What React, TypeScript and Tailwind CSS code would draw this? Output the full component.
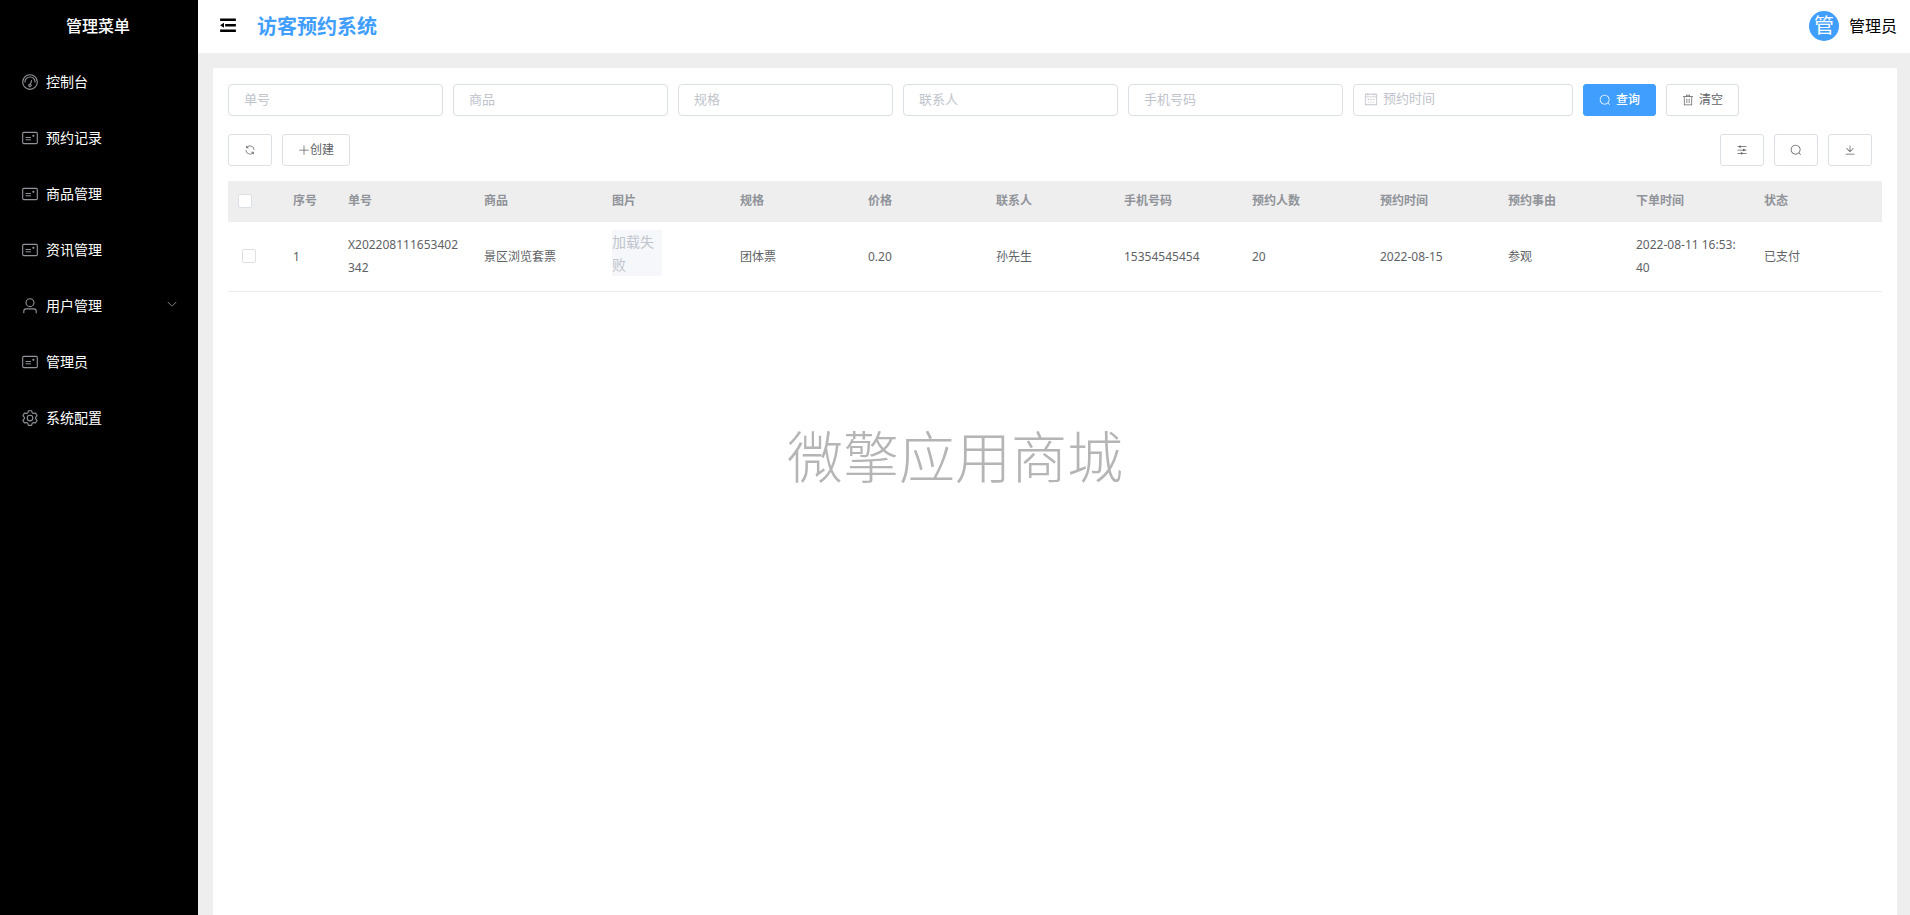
import React, { useState } from "react";

interface IconProps {
  name: IconName;
  className?: string;
}

// 1024-grid glyphs, filled with the current text colour
const ICONS = {
  odometer: [
    "M512 896a384 384 0 1 0 0-768 384 384 0 0 0 0 768zm0 64a448 448 0 1 1 0-896 448 448 0 0 1 0 896z",
    "M192 512a320 320 0 1 1 640 0 32 32 0 1 1-64 0 256 256 0 1 0-512 0 32 32 0 0 1-64 0z",
    "M570.432 627.84A96 96 0 1 1 509.568 608l60.992-187.776A32 32 0 1 1 631.424 440l-60.992 187.776zM502.08 734.464a32 32 0 1 0 19.84-60.928 32 32 0 0 0-19.84 60.928z",
  ],
  postcard: [
    "M160 224a32 32 0 0 0-32 32v512a32 32 0 0 0 32 32h704a32 32 0 0 0 32-32V256a32 32 0 0 0-32-32H160zm0-64h704a96 96 0 0 1 96 96v512a96 96 0 0 1-96 96H160a96 96 0 0 1-96-96V256a96 96 0 0 1 96-96z",
    "M704 320a64 64 0 1 1 0 128 64 64 0 0 1 0-128zM288 448h256q32 0 32 32t-32 32H288q-32 0-32-32t32-32zm0 128h256q32 0 32 32t-32 32H288q-32 0-32-32t32-32z",
  ],
  user: [
    "M512 512a192 192 0 1 0 0-384 192 192 0 0 0 0 384zm0 64a256 256 0 1 1 0-512 256 256 0 0 1 0 512zm320 320v-96a96 96 0 0 0-96-96H288a96 96 0 0 0-96 96v96a32 32 0 1 1-64 0v-96a160 160 0 0 1 160-160h448a160 160 0 0 1 160 160v96a32 32 0 1 1-64 0z",
  ],
  setting: [
    "M600.704 64a32 32 0 0 1 30.464 22.208l35.2 109.376c14.784 7.232 28.928 15.36 42.432 24.512l112.384-24.192a32 32 0 0 1 34.432 15.36L944.32 364.8a32 32 0 0 1-4.032 37.504l-77.12 85.12a357.12 357.12 0 0 1 0 49.024l77.12 85.248a32 32 0 0 1 4.032 37.504l-88.704 153.6a32 32 0 0 1-34.432 15.296L708.8 803.904c-13.44 9.088-27.648 17.28-42.368 24.512l-35.264 109.376A32 32 0 0 1 600.704 960H423.296a32 32 0 0 1-30.464-22.208L357.696 828.48a351.616 351.616 0 0 1-42.56-24.64l-112.32 24.256a32 32 0 0 1-34.432-15.36L79.68 659.2a32 32 0 0 1 4.032-37.504l77.12-85.248a357.12 357.12 0 0 1 0-48.896l-77.12-85.248A32 32 0 0 1 79.68 364.8l88.704-153.6a32 32 0 0 1 34.432-15.296l112.32 24.256c13.568-9.152 27.776-17.408 42.56-24.64l35.2-109.312A32 32 0 0 1 423.232 64H600.64zm-23.424 64H446.72l-36.352 113.088-24.512 11.968a294.113 294.113 0 0 0-34.816 20.096l-22.656 15.36-116.224-25.088-65.28 113.152 79.68 88.192-1.92 27.136a293.12 293.12 0 0 0 0 40.192l1.92 27.136-79.808 88.192 65.344 113.152 116.224-25.024 22.656 15.296a294.113 294.113 0 0 0 34.816 20.096l24.512 11.968L446.72 896h130.688l36.48-113.152 24.448-11.904a288.282 288.282 0 0 0 34.752-20.096l22.592-15.296 116.288 25.024 65.28-113.152-79.744-88.192 1.92-27.136a293.12 293.12 0 0 0 0-40.256l-1.92-27.136 79.808-88.128-65.344-113.152-116.288 24.96-22.592-15.232a287.616 287.616 0 0 0-34.752-20.096l-24.448-11.904L577.344 128zM512 320a192 192 0 1 1 0 384 192 192 0 0 1 0-384zm0 64a128 128 0 1 0 0 256 128 128 0 0 0 0-256z",
  ],
  arrowDown: [
    "M831.872 340.864 512 652.672 192.128 340.864a30.592 30.592 0 0 0-42.752 0 29.12 29.12 0 0 0 0 41.6L489.664 714.24a32 32 0 0 0 44.672 0l340.288-331.712a29.12 29.12 0 0 0 0-41.728 30.592 30.592 0 0 0-42.752 0z",
  ],
  refresh: [
    "M771.776 794.88A384 384 0 0 1 128 512h64a320 320 0 0 0 555.712 216.448H654.72a32 32 0 1 1 0-64h149.056a32 32 0 0 1 32 32v148.928a32 32 0 1 1-64 0v-50.56zM276.288 295.616h92.992a32 32 0 0 1 0 64H220.16a32 32 0 0 1-32-32V178.56a32 32 0 0 1 64 0v50.56A384 384 0 0 1 896.128 512h-64a320 320 0 0 0-555.776-216.384z",
  ],
  plus: [
    "M480 480V128a32 32 0 0 1 64 0v352h352a32 32 0 1 1 0 64H544v352a32 32 0 1 1-64 0V544H128a32 32 0 0 1 0-64h352z",
  ],
  search: [
    "m795.904 750.72 124.992 124.928a32 32 0 0 1-45.248 45.248L750.656 795.904a416 416 0 1 1 45.248-45.248zM480 832a352 352 0 1 0 0-704 352 352 0 0 0 0 704z",
  ],
  trash: [
    "M160 256H96a32 32 0 0 1 0-64h256V95.936a32 32 0 0 1 32-32h256a32 32 0 0 1 32 32V192h256a32 32 0 1 1 0 64h-64v672a32 32 0 0 1-32 32H192a32 32 0 0 1-32-32V256zm448-64v-64H416v64h192zM224 896h576V256H224v640zm192-128a32 32 0 0 1-32-32V416a32 32 0 0 1 64 0v320a32 32 0 0 1-32 32zm192 0a32 32 0 0 1-32-32V416a32 32 0 0 1 64 0v320a32 32 0 0 1-32 32z",
  ],
  calendar: [
    "M128 384v512h768V192H768v32a32 32 0 1 1-64 0v-32H320v32a32 32 0 0 1-64 0v-32H128v128h768v64H128zm192-256h384V96a32 32 0 1 1 64 0v32h160a32 32 0 0 1 32 32v768a32 32 0 0 1-32 32H96a32 32 0 0 1-32-32V160a32 32 0 0 1 32-32h160V96a32 32 0 0 1 64 0v32zm-32 384h64a32 32 0 0 1 0 64h-64a32 32 0 0 1 0-64zm0 192h64a32 32 0 1 1 0 64h-64a32 32 0 1 1 0-64zm192-192h64a32 32 0 0 1 0 64h-64a32 32 0 0 1 0-64zm0 192h64a32 32 0 1 1 0 64h-64a32 32 0 1 1 0-64zm192-192h64a32 32 0 1 1 0 64h-64a32 32 0 1 1 0-64zm0 192h64a32 32 0 1 1 0 64h-64a32 32 0 1 1 0-64z",
  ],
  operation: [
    "M389.44 768a96.064 96.064 0 0 1 181.12 0H896v64H570.56a96.064 96.064 0 0 1-181.12 0H128v-64h261.44zm192-288a96.064 96.064 0 0 1 181.12 0H896v64H762.56a96.064 96.064 0 0 1-181.12 0H128v-64h453.44zm-320-288a96.064 96.064 0 0 1 181.12 0H896v64H442.56a96.064 96.064 0 0 1-181.12 0H128v-64h133.44z",
  ],
  download: [
    "M160 832h704a32 32 0 1 1 0 64H160a32 32 0 1 1 0-64zm384-253.696 236.288-236.352 45.248 45.248L508.8 704 192 387.2l45.248-45.248L480 584.704V128h64v450.304z",
  ],
  fold: [
    "M64 142h896v142H64zM350 456h610v142H350zM64 768h896v142H64zM284 384v288L64 528z",
  ],
};

type IconName = keyof typeof ICONS;

const Icon: React.FC<IconProps> = ({ name, className = "size-3" }) => (
  <svg
    viewBox="0 0 1024 1024"
    fill="currentColor"
    aria-hidden="true"
    className={`shrink-0 ${className}`}
  >
    {ICONS[name].map((d) => (
      <path key={d} d={d} />
    ))}
  </svg>
);

const MENU: { label: string; icon: IconName; children?: boolean }[] = [
  { label: "控制台", icon: "odometer" },
  { label: "预约记录", icon: "postcard" },
  { label: "商品管理", icon: "postcard" },
  { label: "资讯管理", icon: "postcard" },
  { label: "用户管理", icon: "user", children: true },
  { label: "管理员", icon: "postcard" },
  { label: "系统配置", icon: "setting" },
];

const FILTERS = ["单号", "商品", "规格", "联系人", "手机号码"];

const COLUMNS = [
  "商品",
  "图片",
  "规格",
  "价格",
  "联系人",
  "手机号码",
  "预约人数",
  "预约时间",
  "预约事由",
  "下单时间",
  "状态",
];

const ORDERS = [
  {
    no: "X202208111653402342",
    goods: "景区浏览套票",
    spec: "团体票",
    price: "0.20",
    contact: "孙先生",
    phone: "15354545454",
    people: "20",
    date: "2022-08-15",
    reason: "参观",
    createdAt: "2022-08-11 16:53:40",
    status: "已支付",
  },
];

const BUTTON =
  "flex h-8 items-center justify-center rounded-[3px] border px-[15px] text-xs";
const PLAIN = "border-[#dcdfe6] bg-white text-[#606266]";
const CHECKBOX =
  "block size-[14px] appearance-none rounded-xs border border-[#dcdfe6] bg-white checked:border-[#409eff] checked:bg-[#409eff]";

const Sidebar = () => (
  <aside className="w-[198px] shrink-0 bg-black text-white">
    <h2 className="flex h-[54px] items-center justify-center pr-[2px] pb-[2px] text-base font-medium">
      管理菜单
    </h2>
    <nav>
      {MENU.map((item) => (
        <a
          key={item.label}
          href="#"
          className="flex h-14 items-center pr-5 pl-[21px] text-sm"
        >
          <Icon
            name={item.icon}
            className="mr-[7px] size-[18px] text-[#909399]"
          />
          {item.label}
          {item.children && (
            <Icon
              name="arrowDown"
              className="mb-1 ml-auto size-3 text-[#909399]"
            />
          )}
        </a>
      ))}
    </nav>
  </aside>
);

const Header = () => (
  <header className="flex h-[53px] items-center bg-white pr-[13px] pl-[21px]">
    <button type="button" aria-label="折叠菜单" className="mr-5 mb-1">
      <Icon name="fold" className="size-[18px]" />
    </button>
    <h1 className="text-xl font-bold text-[#409eff]">访客预约系统</h1>
    <div className="ml-auto flex items-center gap-[10px] pb-[2px]">
      <span className="flex size-[30px] items-center justify-center rounded-full bg-[#409eff] text-xl text-white">
        管
      </span>
      <span className="text-base text-black">管理员</span>
    </div>
  </header>
);

const FilterBar = () => (
  <form className="flex flex-wrap gap-[10px]">
    {FILTERS.map((label) => (
      <input
        key={label}
        type="text"
        aria-label={label}
        placeholder={label}
        className="h-8 w-[215px] rounded border border-[#dcdfe6] px-[15px] pb-[3px] text-[13px] outline-none placeholder:text-[#c0c4cc]"
      />
    ))}
    <label className="flex h-8 w-[220px] items-center gap-[5px] rounded border border-[#dcdfe6] px-[10px] pb-[2px] text-[#c0c4cc]">
      <Icon name="calendar" className="size-[14px]" />
      <input
        type="text"
        aria-label="预约时间"
        placeholder="预约时间"
        className="w-full min-w-0 text-[13px] outline-none placeholder:text-[#c0c4cc]"
      />
    </label>
    <button
      type="button"
      className={`${BUTTON} gap-[5px] border-[#409eff] bg-[#409eff] font-medium text-white`}
    >
      <Icon name="search" />
      查询
    </button>
    <button type="reset" className={`${BUTTON} ${PLAIN} gap-[5px]`}>
      <Icon name="trash" />
      清空
    </button>
  </form>
);

const Toolbar = () => (
  <div className="mt-[18px] flex gap-[10px] pr-[10px]">
    <button type="button" aria-label="刷新" className={`${BUTTON} ${PLAIN}`}>
      <Icon name="refresh" />
    </button>
    <button type="button" className={`${BUTTON} ${PLAIN} mr-auto`}>
      <Icon name="plus" />
      创建
    </button>
    <button type="button" aria-label="列设置" className={`${BUTTON} ${PLAIN}`}>
      <Icon name="operation" />
    </button>
    <button type="button" aria-label="搜索" className={`${BUTTON} ${PLAIN}`}>
      <Icon name="search" />
    </button>
    <button type="button" aria-label="导出" className={`${BUTTON} ${PLAIN}`}>
      <Icon name="download" />
    </button>
  </div>
);

const OrderTable = () => {
  const [checked, setChecked] = useState(false);

  return (
    <table className="mt-[15px] w-full table-fixed text-left text-xs leading-[23px] text-[#606266]">
      <colgroup>
        <col className="w-[55px]" />
        <col className="w-[55px]" />
        <col className="w-[136px]" />
        {COLUMNS.map((title) => (
          <col key={title} />
        ))}
      </colgroup>
      <thead className="bg-[#eeeeee] text-[#909399]">
        <tr className="h-[41px]">
          <th className="px-[10px] pb-[2px]">
            <input
              type="checkbox"
              aria-label="全选"
              className={CHECKBOX}
              checked={checked}
              onChange={(e) => setChecked(e.target.checked)}
            />
          </th>
          <th className="px-[10px] pb-[2px]">序号</th>
          <th className="px-[10px] pb-[2px]">单号</th>
          {COLUMNS.map((title) => (
            <th key={title} className="px-[10px] pb-[2px]">
              {title}
            </th>
          ))}
        </tr>
      </thead>
      <tbody>
        {ORDERS.map((order, index) => (
          <tr key={order.no} className="border-b border-[#ebebeb]">
            <td className="px-[14px] pb-[2px]">
              <input
                type="checkbox"
                aria-label={order.no}
                className={CHECKBOX}
                checked={checked}
                onChange={(e) => setChecked(e.target.checked)}
              />
            </td>
            <td className="px-[10px]">{index + 1}</td>
            <td className="px-[10px] pb-[2px] break-all">{order.no}</td>
            <td className="px-[10px]">{order.goods}</td>
            <td className="px-[10px] pt-2 pb-[15px]">
              <div className="w-[50px] bg-[#f5f7fa] text-sm leading-[23px] text-[#c0c4cc]">
                加载失败
              </div>
            </td>
            <td className="px-[10px]">{order.spec}</td>
            <td className="px-[10px]">{order.price}</td>
            <td className="px-[10px]">{order.contact}</td>
            <td className="px-[10px]">{order.phone}</td>
            <td className="px-[10px]">{order.people}</td>
            <td className="px-[10px]">{order.date}</td>
            <td className="px-[10px]">{order.reason}</td>
            <td className="pr-4 pb-[2px] pl-[10px] break-all">
              {order.createdAt}
            </td>
            <td className="px-[10px]">{order.status}</td>
          </tr>
        ))}
      </tbody>
    </table>
  );
};

const App: React.FC = () => {
  return (
    <div className="flex min-h-screen bg-[#eeeeee] font-['Noto_Sans','Noto_Sans_CJK_SC',sans-serif]">
      <Sidebar />
      <div className="flex min-w-0 flex-1 flex-col">
        <Header />
        <main className="mt-[15px] mr-[13px] ml-[15px] flex-1 bg-white px-[15px] pt-4">
          <FilterBar />
          <Toolbar />
          <OrderTable />
        </main>
      </div>

      {/* Watermark over the whole page */}
      <div className="pointer-events-none fixed inset-0 flex items-center justify-center pb-1 text-[56px] font-light text-[#b5b5b5]">
        微擎应用商城
      </div>
    </div>
  );
};

export default App;
